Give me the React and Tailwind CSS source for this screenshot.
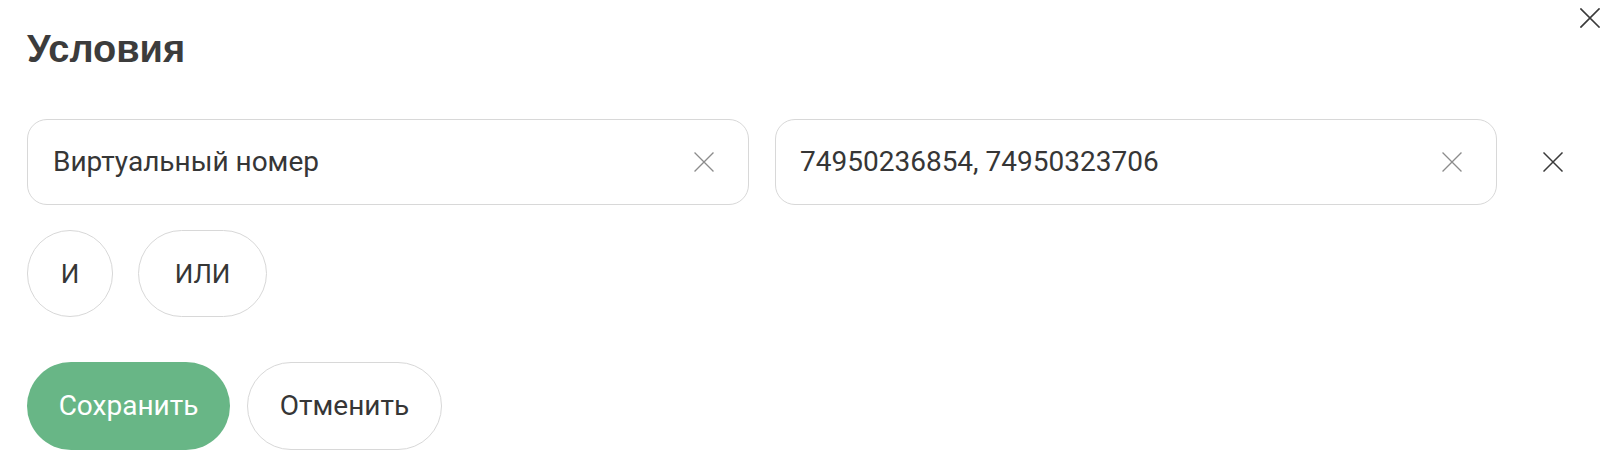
import React from "react";

function XIcon({ className, stroke = 1.6 }) {
  return (
    <svg viewBox="0 0 20 20" className={className} fill="none" stroke="currentColor" strokeWidth={stroke} strokeLinecap="square">
      <path d="M1 1 L19 19 M19 1 L1 19" />
    </svg>
  );
}

export default function App() {
  return (
    <div className="relative w-[1620px] h-[466px] bg-white pl-[27px] pt-[28px] text-[#363636]" style={{ fontFamily: "Roboto, 'Noto Sans', sans-serif" }}>
      <button className="absolute right-[20px] top-[8px] w-[20px] h-[20px] text-[#3a3a3a]">
        <XIcon className="w-[20px] h-[20px]" stroke={1.7} />
      </button>

      <h1 className="text-[38px] leading-[42px] font-bold text-[#3c3c3c]" style={{ fontFamily: "'Liberation Sans', Arial, sans-serif" }}>
        Условия
      </h1>

      <div className="mt-[49px] flex items-center">
        <div className="w-[722px] h-[86px] rounded-[20px] border border-[#d8d8d8] flex items-center pl-[25px] pr-[34px]">
          <span className="flex-1 text-[28px] leading-[32px]">Виртуальный номер</span>
          <XIcon className="w-[20px] h-[20px] text-[#8c8c8c]" stroke={1.3} />
        </div>
        <div className="ml-[26px] w-[722px] h-[86px] rounded-[20px] border border-[#d8d8d8] flex items-center pl-[24px] pr-[34px]">
          <span className="flex-1 text-[28px] leading-[32px]">74950236854, 74950323706</span>
          <XIcon className="w-[20px] h-[20px] text-[#8c8c8c]" stroke={1.3} />
        </div>
        <button className="ml-[46px] w-[20px] h-[20px] text-[#3a3a3a]">
          <XIcon className="w-[20px] h-[20px]" stroke={1.5} />
        </button>
      </div>

      <div className="mt-[25px] flex items-center gap-[25px]">
        <button className="w-[86px] h-[87px] rounded-full border border-[#d8d8d8] text-[26px] leading-none text-[#363636]">И</button>
        <button className="w-[129px] h-[87px] rounded-full border border-[#d8d8d8] text-[26px] leading-none text-[#363636]">ИЛИ</button>
      </div>

      <div className="mt-[45px] flex items-center gap-[17px]">
        <button className="w-[203px] h-[88px] rounded-full bg-[#68b686] text-white text-[28px] leading-none">Сохранить</button>
        <button className="w-[195px] h-[88px] rounded-full border border-[#d8d8d8] text-[28px] leading-none text-[#363636]">Отменить</button>
      </div>
    </div>
  );
}
